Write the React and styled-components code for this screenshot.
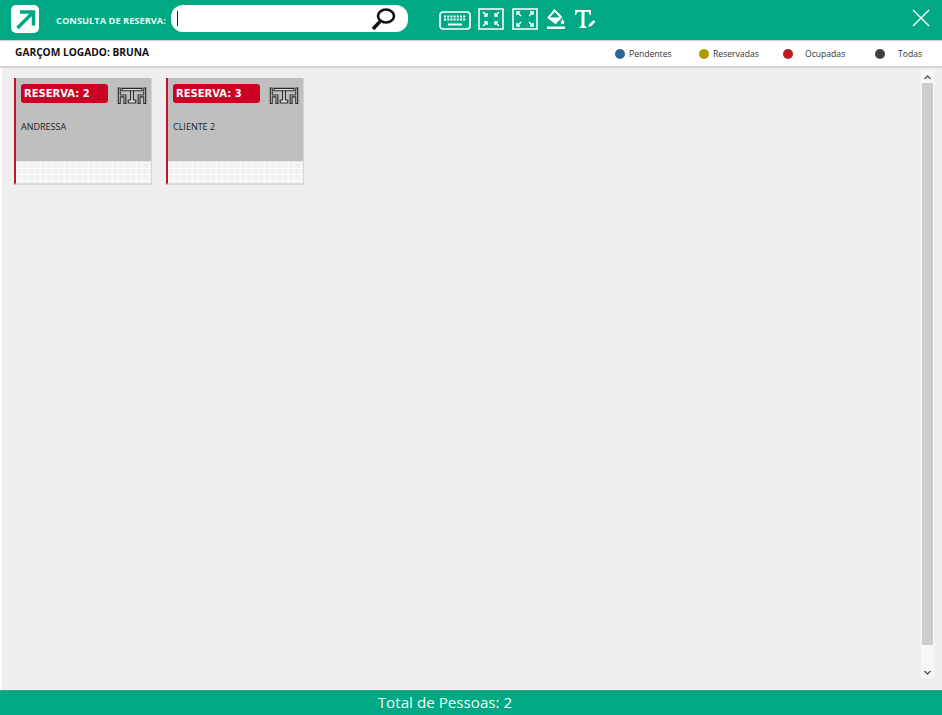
import React from 'react';
import styled, { createGlobalStyle } from 'styled-components';

const GREEN = '#00a884';

const GlobalStyle = createGlobalStyle`
  html, body { margin: 0; padding: 0; background: #fff; }
  body { font-family: "Open Sans", "Noto Sans", "Liberation Sans", sans-serif; }
  * { box-sizing: border-box; }
`;

const Page = styled.div`
  width: 942px;
  height: 715px;
  display: flex;
  flex-direction: column;
  overflow: hidden;
`;

const Header = styled.header`
  height: 40px;
  flex: none;
  background: ${GREEN};
  display: flex;
  align-items: center;
  padding: 0 11px;
`;

const Logo = styled.svg`
  width: 28px;
  height: 28px;
  flex: none;
  margin-top: -3px;
`;

const SearchLabel = styled.label`
  margin-left: 17px;
  font-size: 9.3px;
  font-weight: 700;
  color: #e8f7f3;
  white-space: nowrap;
  width: 114px;
`;

const SearchBox = styled.div`
  width: 237px;
  height: 27px;
  margin-left: 1px;
  margin-top: -3px;
  flex: none;
  background: #fff;
  border-radius: 12px;
  display: flex;
  align-items: center;
  justify-content: space-between;
  padding: 0 12px 0 6px;
`;

const Caret = styled.span`
  width: 1px;
  height: 15px;
  background: #222;
`;

const Tools = styled.div`
  display: flex;
  align-items: center;
  gap: 8px;
  margin-left: 31px;
  margin-top: -2px;
`;

const ToolIcon = styled.svg`
  flex: none;
  display: block;
`;

const KeyboardIcon = styled(ToolIcon)`
  margin-right: -1px;
  margin-top: 3px;
`;

const CloseButton = styled.svg`
  width: 18px;
  height: 18px;
  margin-left: auto;
  margin-right: 1px;
  margin-top: -5px;
`;

const SubBar = styled.div`
  height: 28px;
  flex: none;
  background: #fff;
  border-top: 1px solid #c7d3cf;
  border-bottom: 2px solid #d6d6d6;
  display: flex;
  align-items: center;
  padding: 0 19px 2px 15px;
`;

const Waiter = styled.div`
  font-size: 10.2px;
  font-weight: 700;
  color: #111;
  margin-top: -2px;
`;

const Legend = styled.div`
  margin-left: auto;
  display: flex;
  align-items: center;
  height: 100%;
  padding-top: 3px;
`;

const LegendItem = styled.div`
  width: ${(p) => p.$width}px;
  display: flex;
  align-items: center;
  gap: ${(p) => p.$gap}px;
  font-size: 8.6px;
  color: #333;
`;

const Dot = styled.span`
  width: 10px;
  height: 10px;
  border-radius: 50%;
  flex: none;
  background: ${(p) => p.$color};
`;

const Main = styled.main`
  flex: 1;
  min-height: 0;
  background: #efefef;
  border-left: 2px solid #fff;
  display: flex;
  justify-content: space-between;
  padding: 10px 8px 9px 12px;
`;

const Cards = styled.div`
  display: flex;
  align-items: flex-start;
  gap: 14px;
`;

const Card = styled.article`
  width: 138px;
  height: 107px;
  display: flex;
  flex-direction: column;
  border-left: 2px solid #c8102e;
  border-right: 1px solid #d4d4d4;
  border-bottom: 2px solid #dcdcdc;
`;

const CardTop = styled.div`
  height: 83px;
  flex: none;
  background: #bfbfbf;
  padding: 6px 5px 0;
`;

const CardHead = styled.div`
  display: flex;
  align-items: flex-start;
  justify-content: space-between;
`;

const Badge = styled.div`
  width: 87px;
  height: 19px;
  background: #cc0022;
  border-radius: 3px;
  color: #fff;
  font-family: "DejaVu Sans", sans-serif;
  font-size: 10px;
  font-weight: 700;
  line-height: 19px;
  padding-left: 3px;
  white-space: nowrap;
`;

const TableIcon = styled.svg`
  width: 30px;
  height: 17px;
  flex: none;
  margin-right: -1px;
  margin-top: 3px;
`;

const ClientName = styled.div`
  margin-top: 16px;
  font-size: 9px;
  color: #222;
`;

const CardGrid = styled.div`
  flex: 1;
  background-color: #f1f1f1;
  background-image:
    linear-gradient(#fbfbfb 1px, transparent 1px),
    linear-gradient(90deg, #fbfbfb 1px, transparent 1px);
  background-size: 6px 6px;
  border-top: 1px solid #e2e2e2;
`;

const Scrollbar = styled.div`
  width: 13px;
  height: 608px;
  flex: none;
  margin-top: -8px;
  padding-top: 5px;
  background: #f7f7f7;
  display: flex;
  flex-direction: column;
  align-items: center;
`;

const Arrow = styled.svg`
  width: 7px;
  height: 5px;
  flex: none;
  margin-top: ${(p) => p.$top}px;
`;

const Thumb = styled.div`
  width: 11px;
  height: 562px;
  flex: none;
  margin-top: 3px;
  background: #cdcdcd;
`;

const Footer = styled.footer`
  height: 25px;
  flex: none;
  background: ${GREEN};
  border-top: 1px solid #18b08f;
  color: #f2fbf9;
  font-size: 15.2px;
  line-height: 22px;
  text-align: center;
  padding-right: 52px;
`;

const legend = [
  { label: 'Pendentes', color: '#2e6496', width: 84, gap: 4 },
  { label: 'Reservadas', color: '#b09a00', width: 84, gap: 4 },
  { label: 'Ocupadas', color: '#bf1a1f', width: 92, gap: 12 },
  { label: 'Todas', color: '#404040', width: 48, gap: 13 },
];

const reservas = [
  { numero: 2, cliente: 'ANDRESSA' },
  { numero: 3, cliente: 'CLIENTE 2' },
];

function TableGlyph() {
  return (
    <TableIcon viewBox="0 0 30 18" fill="#dcdcdc" stroke="#2a2a2a" strokeWidth="1.2">
      <path d="M.5 1h2v7.500h6v9h-2v-7h-4v7h-2zM29.500 1h-2v7.500h-6v9h2v-7h4v7h2z" />
      <path d="M4.500 1.500h21v2.500h-21zM13.500 4h3v9.500l2.500.5v3h-8v-3l2.500-.5z" />
    </TableIcon>
  );
}

export default function App() {
  return (
    <Page>
      <GlobalStyle />
      <Header>
        <Logo viewBox="0 0 28 28">
          <rect width="28" height="28" rx="5" fill="#fff" />
          <path d="M9 7h13.500v13.500M21 8.500 6.500 23" fill="none" stroke={GREEN} strokeWidth="3.5" />
        </Logo>
        <SearchLabel>CONSULTA DE RESERVA:</SearchLabel>
        <SearchBox>
          <Caret />
          <svg width="25" height="24" viewBox="0 0 25 24" fill="none" stroke="#111">
            <ellipse cx="15" cy="9" rx="8" ry="6.5" strokeWidth="2.6" />
            <path d="M9 14.500 2 22" strokeWidth="3.4" />
          </svg>
        </SearchBox>
        <Tools>
          <KeyboardIcon width="32" height="19" viewBox="0 0 32 19" fill="none" stroke="#fff">
            <rect x="1" y="1" width="30" height="17" rx="3" strokeWidth="1.7" />
            <path d="M5 5.500h22M5 8.500h22" strokeWidth="1.8" strokeDasharray="2 1.2" />
            <path d="M9 13.500h14" strokeWidth="2" />
          </KeyboardIcon>
          <ToolIcon width="26" height="22" viewBox="0 0 26 22" fill="none" stroke="#fff" strokeWidth="1.5">
            <rect x="1" y="1" width="24" height="20" />
            <path d="M5 4l4 4M9 5v3H6M21 4l-4 4M17 5v3h3M5 18l4-4M9 17v-3H6M21 18l-4-4M17 17v-3h3" />
          </ToolIcon>
          <ToolIcon width="26" height="22" viewBox="0 0 26 22" fill="none" stroke="#fff" strokeWidth="1.5">
            <rect x="1" y="1" width="24" height="20" />
            <path d="M5 4l4 4M5 7V4h3M21 4l-4 4M21 7V4h-3M5 18l4-4M5 15v3h3M21 18l-4-4M21 15v3h-3" />
          </ToolIcon>
          <ToolIcon width="20" height="22" viewBox="0 0 20 22">
            <path d="M8.500 2.500 15 9l-5.500 6L2.500 9.500z" fill="none" stroke="#fff" strokeWidth="2" />
            <path d="M3 9.500h12l-5.500 5.500z" fill="#fff" />
            <path d="M16.500 11c1 1.500 1.800 2.400 1.800 3.400a1.800 1.800 0 0 1-3.600 0c0-1 .8-1.900 1.800-3.400zM1 18.500h18V21H1z" fill="#fff" />
          </ToolIcon>
          <ToolIcon width="22" height="20" viewBox="0 0 22 20" fill="#fff">
            <path d="M1 1h16v5h-1.200c-.4-2-1-3.200-3-3.200H10.500V16.500c0 .8.600 1.100 2 1.200V19h-7v-1.300c1.400-.1 2-.4 2-1.200V2.800H5.200c-2 0-2.600 1.200-3 3.200H1z" />
            <path d="M15 15.500l4.500-4.500 2 1.800-4.500 4.500-2.500.6z" />
          </ToolIcon>
        </Tools>
        <CloseButton viewBox="0 0 18 18" stroke="#fff" strokeWidth="1.4">
          <path d="M1 1l16 16M17 1 1 17" />
        </CloseButton>
      </Header>

      <SubBar>
        <Waiter>GARÇOM LOGADO: BRUNA</Waiter>
        <Legend>
          {legend.map((item) => (
            <LegendItem key={item.label} $width={item.width} $gap={item.gap}>
              <Dot $color={item.color} />
              {item.label}
            </LegendItem>
          ))}
        </Legend>
      </SubBar>

      <Main>
        <Cards>
          {reservas.map((r) => (
            <Card key={r.numero}>
              <CardTop>
                <CardHead>
                  <Badge>RESERVA: {r.numero}</Badge>
                  <TableGlyph />
                </CardHead>
                <ClientName>{r.cliente}</ClientName>
              </CardTop>
              <CardGrid />
            </Card>
          ))}
        </Cards>
        <Scrollbar>
          <Arrow $top={0} viewBox="0 0 7 5" fill="none" stroke="#555" strokeWidth="1.4">
            <path d="M.5 4 3.500 1l3 3" />
          </Arrow>
          <Thumb />
          <Arrow $top={25} viewBox="0 0 7 5" fill="none" stroke="#555" strokeWidth="1.4">
            <path d="M.5 1l3 3 3-3" />
          </Arrow>
        </Scrollbar>
      </Main>

      <Footer>Total de Pessoas: 2</Footer>
    </Page>
  );
}
